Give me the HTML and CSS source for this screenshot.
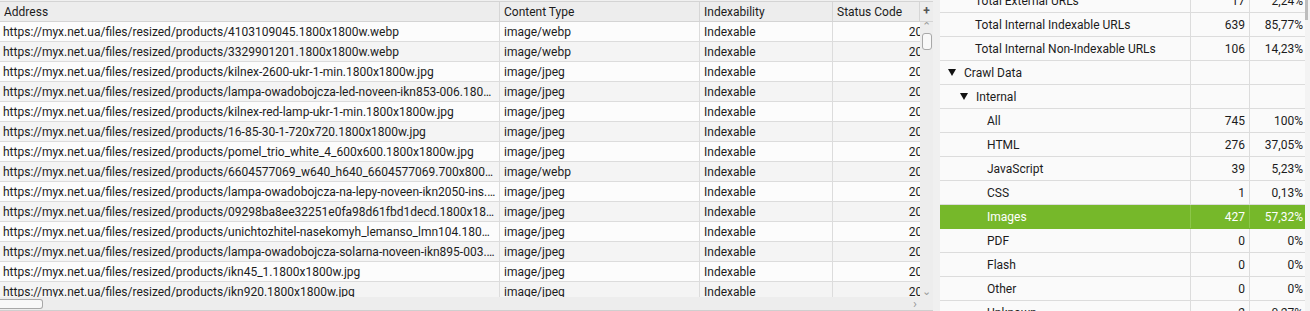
FILE: index.html
```html
<!DOCTYPE html>
<html lang="en">
<head>
    <meta charset="UTF-8">
    <title>Crawl overview</title>
    <link rel="stylesheet" href="styles.css">
</head>
<body>
    <div class="app">
        <!-- left: url table -->
        <div class="url-pane">
            <div class="grid-head">
                <div class="hcell">Address</div>
                <div class="hcell">Content Type</div>
                <div class="hcell">Indexability</div>
                <div class="hcell">Status Code</div>
                <div class="hcell plus">+</div>
            </div>
            <div class="grid-body">
                <div class="row"><div class="cell">https://myx.net.ua/files/resized/products/4103109045.1800x1800w.webp</div><div class="cell">image/webp</div><div class="cell">Indexable</div><div class="cell num">200</div></div>
                <div class="row"><div class="cell">https://myx.net.ua/files/resized/products/3329901201.1800x1800w.webp</div><div class="cell">image/webp</div><div class="cell">Indexable</div><div class="cell num">200</div></div>
                <div class="row"><div class="cell">https://myx.net.ua/files/resized/products/kilnex-2600-ukr-1-min.1800x1800w.jpg</div><div class="cell">image/jpeg</div><div class="cell">Indexable</div><div class="cell num">200</div></div>
                <div class="row"><div class="cell">https://myx.net.ua/files/resized/products/lampa-owadobojcza-led-noveen-ikn853-006.1800x1800w.jpg</div><div class="cell">image/jpeg</div><div class="cell">Indexable</div><div class="cell num">200</div></div>
                <div class="row"><div class="cell">https://myx.net.ua/files/resized/products/kilnex-red-lamp-ukr-1-min.1800x1800w.jpg</div><div class="cell">image/jpeg</div><div class="cell">Indexable</div><div class="cell num">200</div></div>
                <div class="row"><div class="cell">https://myx.net.ua/files/resized/products/16-85-30-1-720x720.1800x1800w.jpg</div><div class="cell">image/jpeg</div><div class="cell">Indexable</div><div class="cell num">200</div></div>
                <div class="row"><div class="cell">https://myx.net.ua/files/resized/products/pomel_trio_white_4_600x600.1800x1800w.jpg</div><div class="cell">image/jpeg</div><div class="cell">Indexable</div><div class="cell num">200</div></div>
                <div class="row"><div class="cell">https://myx.net.ua/files/resized/products/6604577069_w640_h640_6604577069.700x800.1800x1800w.webp</div><div class="cell">image/webp</div><div class="cell">Indexable</div><div class="cell num">200</div></div>
                <div class="row"><div class="cell">https://myx.net.ua/files/resized/products/lampa-owadobojcza-na-lepy-noveen-ikn2050-ins.1800x1800w.jpg</div><div class="cell">image/jpeg</div><div class="cell">Indexable</div><div class="cell num">200</div></div>
                <div class="row"><div class="cell">https://myx.net.ua/files/resized/products/09298ba8ee32251e0fa98d61fbd1decd.1800x1800w.jpg</div><div class="cell">image/jpeg</div><div class="cell">Indexable</div><div class="cell num">200</div></div>
                <div class="row"><div class="cell">https://myx.net.ua/files/resized/products/unichtozhitel-nasekomyh_lemanso_lmn104.1800x1800w.jpg</div><div class="cell">image/jpeg</div><div class="cell">Indexable</div><div class="cell num">200</div></div>
                <div class="row"><div class="cell">https://myx.net.ua/files/resized/products/lampa-owadobojcza-solarna-noveen-ikn895-003.1800x1800w.jpg</div><div class="cell">image/jpeg</div><div class="cell">Indexable</div><div class="cell num">200</div></div>
                <div class="row"><div class="cell">https://myx.net.ua/files/resized/products/ikn45_1.1800x1800w.jpg</div><div class="cell">image/jpeg</div><div class="cell">Indexable</div><div class="cell num">200</div></div>
                <div class="row"><div class="cell">https://myx.net.ua/files/resized/products/ikn920.1800x1800w.jpg</div><div class="cell">image/jpeg</div><div class="cell">Indexable</div><div class="cell num">200</div></div>

                <div class="vscroll">
                    <span class="arrow">&#8963;</span>
                    <span class="thumb"></span>
                    <span class="arrow down">&#8964;</span>
                </div>
            </div>
            <div class="hscroll">
                <span class="hthumb"></span>
                <span class="harrow">&#8250;</span>
            </div>
        </div>

        <div class="splitter"></div>

        <!-- right: overview tree -->
        <div class="overview-pane">
            <div class="tree">
                <div class="trow"><div class="label l1">Total External URLs</div><div class="val">17</div><div class="val">2,24%</div></div>
                <div class="trow"><div class="label l1">Total Internal Indexable URLs</div><div class="val">639</div><div class="val">85,77%</div></div>
                <div class="trow"><div class="label l1">Total Internal Non-Indexable URLs</div><div class="val">106</div><div class="val">14,23%</div></div>
                <div class="trow"><div class="label l0"><span class="caret"></span>Crawl Data</div><div class="val"></div><div class="val"></div></div>
                <div class="trow"><div class="label l1b"><span class="caret"></span>Internal</div><div class="val"></div><div class="val"></div></div>
                <div class="trow"><div class="label l2">All</div><div class="val">745</div><div class="val">100%</div></div>
                <div class="trow"><div class="label l2">HTML</div><div class="val">276</div><div class="val">37,05%</div></div>
                <div class="trow"><div class="label l2">JavaScript</div><div class="val">39</div><div class="val">5,23%</div></div>
                <div class="trow"><div class="label l2">CSS</div><div class="val">1</div><div class="val">0,13%</div></div>
                <div class="trow selected"><div class="label l2">Images</div><div class="val">427</div><div class="val">57,32%</div></div>
                <div class="trow"><div class="label l2">PDF</div><div class="val">0</div><div class="val">0%</div></div>
                <div class="trow"><div class="label l2">Flash</div><div class="val">0</div><div class="val">0%</div></div>
                <div class="trow"><div class="label l2">Other</div><div class="val">0</div><div class="val">0%</div></div>
                <div class="trow"><div class="label l2">Unknown</div><div class="val">2</div><div class="val">0,27%</div></div>
            </div>
            <div class="side-scroll"><span class="side-thumb"></span></div>
        </div>
    </div>
</body>
</html>
```

FILE: styles.css
```css
/* styles.css */
body {
    margin: 0;
    background-color: #f0f0f0;
    overflow: hidden;
    font-family: Roboto, "Liberation Sans", sans-serif;
    font-size: 12px;
    color: #1c1c1c;
}

.app {
    display: flex;
    height: 311px;
    width: 1310px;
}

/* ---------- left table ---------- */
.url-pane {
    width: 933px;
    padding-top: 1px;
    display: flex;
    flex-direction: column;
    box-sizing: border-box;
}

.grid-head,
.row {
    display: grid;
    grid-template-columns: 500px 200px 133px 87px 13px;
}

.grid-head {
    height: 21px;
    background-color: #ededed;
    border-top: 1px solid #d4d4d4;
    border-bottom: 1px solid #d4d4d4;
    box-sizing: border-box;
}

.hcell {
    padding: 2px 4px 0;
    line-height: 17px;
    border-right: 1px solid #d6d6d6;
    white-space: nowrap;
    overflow: hidden;
}

.hcell.plus {
    padding: 1px 0 0;
    text-align: center;
    font-weight: bold;
    color: #555;
    border-right: none;
}

.grid-body {
    position: relative;
    height: 275px;
    overflow: hidden;
    background-color: #fff;
}

.row {
    grid-template-columns: 500px 200px 133px 100px;
    height: 20px;
    border-bottom: 1px solid #dcdcdc;
    box-sizing: border-box;
    background-color: #fcfcfc;
}

.row:nth-child(even) {
    background-color: #f4f4f4;
}

.cell {
    padding: 2px 3px 0 4px;
    line-height: 17px;
    border-right: 1px solid #dcdcdc;
    white-space: nowrap;
    overflow: hidden;
    text-overflow: ellipsis;
}

.cell:first-child {
    padding-left: 3px;
}

.cell.num {
    text-align: right;
    padding-right: 4px;
    border-right: none;
    text-overflow: clip;
}

/* scrollbars drawn over the table body */
.vscroll {
    position: absolute;
    top: 0;
    right: 0;
    bottom: 0;
    width: 13px;
    background-color: #ededed;
    display: flex;
    flex-direction: column;
    align-items: center;
}

.vscroll .arrow {
    color: #9a9a9a;
    font-size: 11px;
    line-height: 9px;
    height: 10px;
}

.vscroll .arrow.down {
    margin-top: auto;
    line-height: 6px;
    height: 8px;
}

.vscroll .thumb {
    width: 8px;
    height: 15px;
    margin-top: 1px;
    border: 1px solid #a8a8a8;
    border-radius: 3px;
    background-color: #f8f8f8;
}

.hscroll {
    height: 14px;
    background-color: #ededed;
    border-bottom: 1px solid #cfcfcf;
    box-sizing: border-box;
    display: flex;
    align-items: center;
}

.hthumb {
    width: 42px;
    height: 8px;
    border: 1px solid #a8a8a8;
    border-left: none;
    border-radius: 0 3px 3px 0;
    background-color: #f8f8f8;
}

.harrow {
    margin-left: auto;
    margin-right: 16px;
    color: #9a9a9a;
    font-size: 13px;
    line-height: 12px;
}

.splitter {
    width: 7px;
    background-color: #f0f0f0;
}

/* ---------- right overview ---------- */
.overview-pane {
    flex: 1;
    display: flex;
    overflow: hidden;
    background-color: #fafafa;
}

.tree {
    flex: 1;
    margin-top: -11px;
}

.trow {
    display: grid;
    grid-template-columns: 251px 59px 55px;
    height: 24px;
    border-bottom: 1px solid #dcdcdc;
    box-sizing: border-box;
}

.trow .label,
.trow .val {
    padding-top: 2px;
    line-height: 21px;
    white-space: nowrap;
    overflow: hidden;
}

.trow .label {
    border-right: 1px solid #dcdcdc;
}

.trow .val {
    text-align: right;
    padding-right: 4px;
}

.trow .val:nth-child(2) {
    border-right: 1px solid #dcdcdc;
}

.trow .val:last-child {
    padding-right: 2px;
}

.l0 { padding-left: 8px; }
.l1 { padding-left: 35px; }
.l1b { padding-left: 20px; }
.l2 { padding-left: 47px; }

.caret {
    display: inline-block;
    width: 0;
    height: 0;
    border-left: 4px solid transparent;
    border-right: 4px solid transparent;
    border-top: 7px solid #111;
    margin-right: 8px;
    vertical-align: 1px;
}

.trow.selected {
    background-color: #76b82a;
    color: #fff;
    border-bottom-color: #76b82a;
}

.trow.selected .label,
.trow.selected .val:nth-child(2) {
    border-right-color: #8cc64a;
}

.side-scroll {
    width: 5px;
    background-color: #f3f3f3;
}

.side-thumb {
    display: block;
    width: 3px;
    height: 20px;
    background-color: #bdbdbd;
}
```
